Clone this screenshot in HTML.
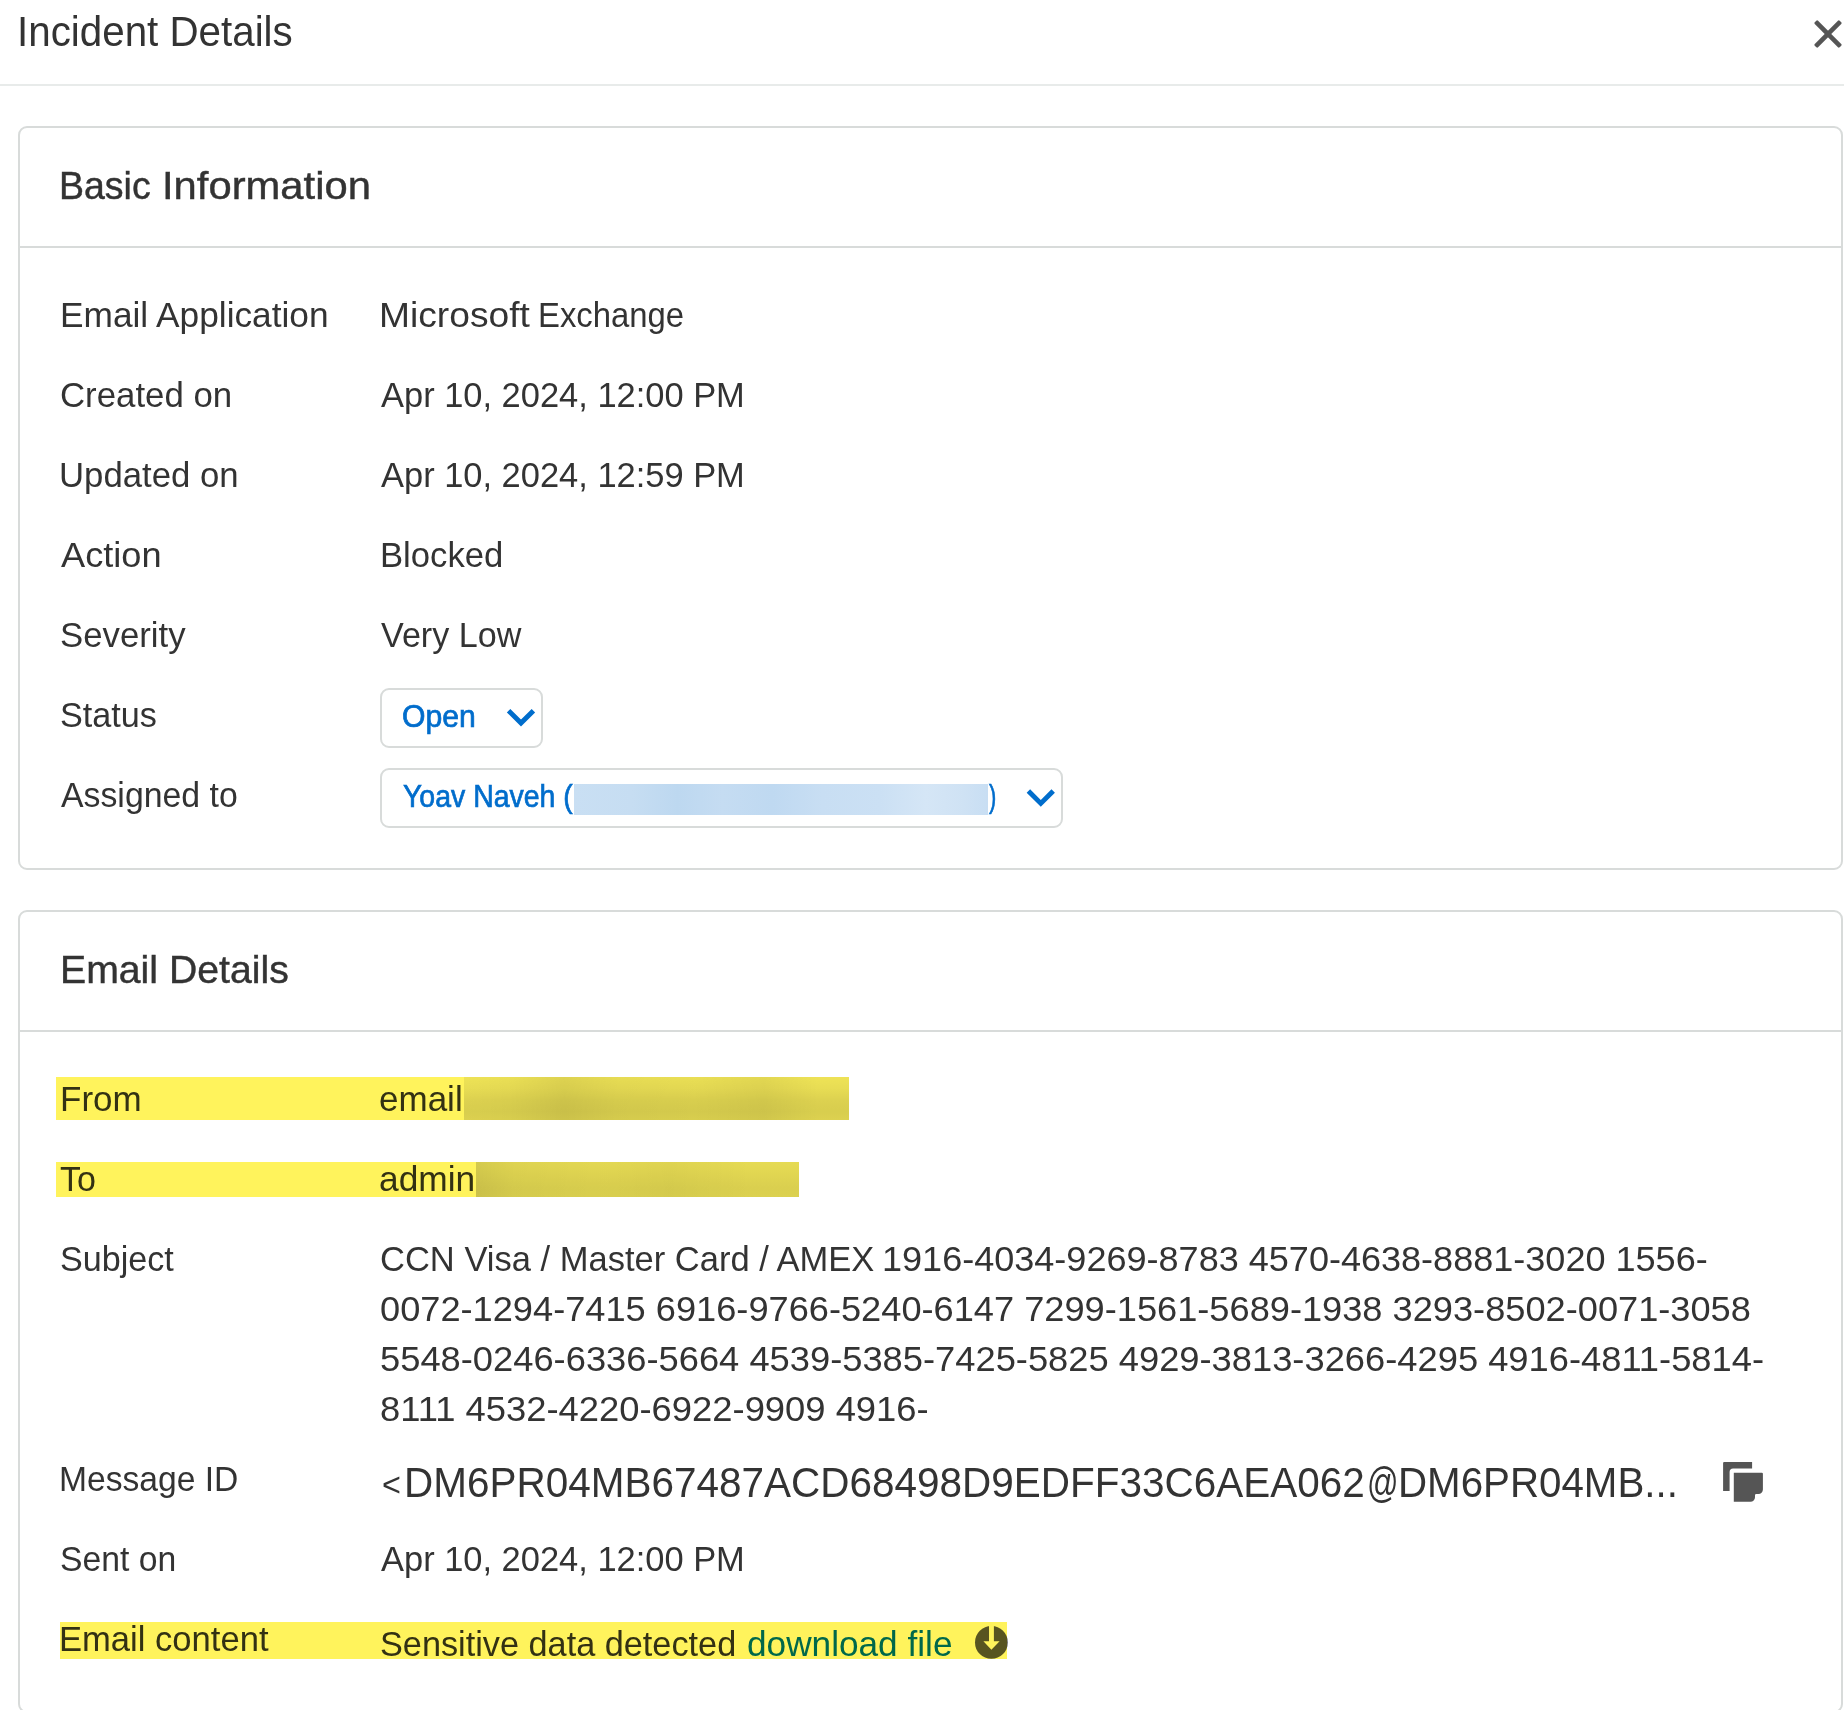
<!DOCTYPE html><html lang="en"><head><meta charset="utf-8"><title>Incident Details</title><style>
*{box-sizing:border-box;margin:0;padding:0}
html,body{width:1844px;height:1710px;overflow:hidden;background:#fff}
body{position:relative;font-family:"Liberation Sans",Arial,sans-serif;color:#333}
.t{position:absolute;white-space:nowrap;line-height:1;transform-origin:0 50%;font-weight:400;font-style:normal;text-decoration:none}
h1,h2{font-weight:400;font-size:inherit}
.hdr{position:absolute;left:0;top:0;width:1844px;height:86px;border-bottom:2px solid #e8ebea}
.card{position:absolute;left:18px;width:1825px;border:2px solid #d8dbda;border-radius:9px}
.c1{top:126px;height:744px}
.c2{top:910px;height:803px}
.hr{position:absolute;left:20px;width:1821px;height:2px;background:#d8dbda}
.sel{position:absolute;border:2px solid #d8dbda;border-radius:9px;background:#fff}
.blur{position:absolute}
.hl{position:absolute;background:#fff35c;mix-blend-mode:multiply}
svg{position:absolute;overflow:visible}
</style></head><body>
<header class="hdr"><h1><span class="t" style="left:17.14px;top:11.00px;font-size:42.5px;transform:scaleX(0.9490);color:#333333;">Incident Details</span></h1>
<svg width="1844" height="86" viewBox="0 0 1844 86"><g fill="#555" transform="translate(1828 34)"><rect x="-17.6" y="-2.35" width="35.2" height="4.7" rx="1.2" transform="rotate(45)"/><rect x="-17.6" y="-2.35" width="35.2" height="4.7" rx="1.2" transform="rotate(-45)"/></g></svg></header>
<section class="card c1"></section><div class="hr" style="top:246px"></div>
<h2><span class="t" style="left:59.25px;top:165.50px;font-size:39px;transform:scaleX(0.9610);color:#333333;-webkit-text-stroke:0.45px #333333;">Basic</span><span class="t" style="left:162.36px;top:165.50px;font-size:39px;transform:scaleX(1.0708);color:#333333;-webkit-text-stroke:0.45px #333333;">Information</span></h2>
<div class="row"><label class="t" style="left:59.66px;top:296.50px;font-size:35px;transform:scaleX(1.0077);color:#333333;">Email Application</label><span class="t" style="left:378.94px;top:296.50px;font-size:35px;transform:scaleX(1.0625);color:#333333;">Microsoft</span><span class="t" style="left:537.58px;top:296.50px;font-size:35px;transform:scaleX(0.9387);color:#333333;">Exchange</span></div>
<div class="row"><label class="t" style="left:60.38px;top:376.50px;font-size:35px;transform:scaleX(0.9937);color:#333333;">Created on</label><span class="t" style="left:381.00px;top:376.50px;font-size:35px;transform:scaleX(0.9841);color:#333333;">Apr 10, 2024, 12:00 PM</span></div>
<div class="row"><label class="t" style="left:59.37px;top:456.50px;font-size:35px;transform:scaleX(0.9921);color:#333333;">Updated on</label><span class="t" style="left:381.00px;top:456.50px;font-size:35px;transform:scaleX(0.9841);color:#333333;">Apr 10, 2024, 12:59 PM</span></div>
<div class="row"><label class="t" style="left:60.60px;top:536.50px;font-size:35px;transform:scaleX(1.0344);color:#333333;">Action</label><span class="t" style="left:379.68px;top:536.50px;font-size:35px;transform:scaleX(0.9903);color:#333333;">Blocked</span></div>
<div class="row"><label class="t" style="left:60.03px;top:616.50px;font-size:35px;transform:scaleX(0.9932);color:#333333;">Severity</label><span class="t" style="left:381.20px;top:616.50px;font-size:35px;transform:scaleX(0.9749);color:#333333;">Very Low</span></div>
<div class="row"><label class="t" style="left:60.10px;top:696.50px;font-size:35px;transform:scaleX(0.9770);color:#333333;">Status</label><div class="sel" style="left:380px;top:688px;width:163px;height:60px"></div><span class="t" style="left:402.23px;top:701.00px;font-size:30.5px;transform:scaleX(0.9880);color:#006dcc;-webkit-text-stroke:0.7px #006dcc;">Open</span>
<svg width="1844" height="1710" viewBox="0 0 1844 1710" style="left:0;top:0"><polyline fill="none" stroke="#006dcc" stroke-width="4.9" points="508.6,710.7 521,723.1 533.4,710.7"/></svg></div>
<div class="row"><label class="t" style="left:60.60px;top:776.50px;font-size:35px;transform:scaleX(0.9661);color:#333333;">Assigned to</label><div class="sel" style="left:380px;top:768px;width:683px;height:60px"></div><span class="t" style="left:402.64px;top:781.00px;font-size:31px;transform:scaleX(0.9176);color:#006dcc;-webkit-text-stroke:0.7px #006dcc;">Yoav Naveh (</span><div class="blur" style="left:574px;top:784px;width:414px;height:31px;background:linear-gradient(90deg,#c9dff3 0%,#c6ddf2 14%,#bdd8f0 25%,#c5dcf2 36%,#bfd9f1 48%,#c8def3 60%,#cbe0f4 74%,#d5e6f6 85%,#cfe2f4 94%,#c8def3 100%)"></div><span class="t" style="left:989.47px;top:781.00px;font-size:31px;transform:scaleX(0.7038);color:#006dcc;-webkit-text-stroke:0.7px #006dcc;">)</span><svg width="1844" height="1710" viewBox="0 0 1844 1710" style="left:0;top:0"><polyline fill="none" stroke="#006dcc" stroke-width="4.9" points="1028.4,791 1040.8,803.4 1053.2,791"/></svg></div>
<section class="card c2"></section><div class="hr" style="top:1030px"></div>
<h2><label class="t" style="left:59.59px;top:949.50px;font-size:39px;transform:scaleX(1.0053);color:#333333;-webkit-text-stroke:0.45px #333333;">Email Details</label></h2>
<div class="row"><label class="t" style="left:60.29px;top:1080.50px;font-size:35px;transform:scaleX(0.9999);color:#333333;">From</label><span class="t" style="left:379.39px;top:1080.50px;font-size:35px;transform:scaleX(1.0003);color:#333333;">email</span><div class="blur" style="left:464px;top:1077px;width:385px;height:43px;background:linear-gradient(90deg,rgba(0,0,0,0) 0%,rgba(0,0,0,.02) 12%,rgba(0,0,0,.07) 26%,rgba(0,0,0,.03) 40%,rgba(0,0,0,.02) 60%,rgba(0,0,0,.05) 78%,rgba(0,0,0,0) 92%),linear-gradient(180deg,#eeeeee 0%,#e8e8e8 25%,#dcdcdc 55%,#d8d8d8 80%,#dcdcdc 100%)"></div></div>
<div class="row"><label class="t" style="left:60.42px;top:1160.50px;font-size:35px;transform:scaleX(0.9713);color:#333333;">To</label><span class="t" style="left:379.35px;top:1160.50px;font-size:35px;transform:scaleX(1.0086);color:#333333;">admin</span><div class="blur" style="left:476px;top:1162px;width:323px;height:35px;background:linear-gradient(90deg,rgba(0,0,0,.08) 0%,rgba(0,0,0,.03) 12%,rgba(0,0,0,.01) 40%,rgba(0,0,0,.03) 60%,rgba(0,0,0,0) 85%),linear-gradient(180deg,#e6e6e6 0%,#e0e0e0 40%,#dadada 75%,#dcdcdc 100%)"></div></div>
<div class="row"><label class="t" style="left:59.68px;top:1240.50px;font-size:35px;transform:scaleX(0.9750);color:#333333;">Subject</label>
<span class="t" style="left:380.20px;top:1240.50px;font-size:35px;transform:scaleX(0.9863);color:#333333;">CCN Visa / Master Card / AMEX</span>
<span class="t" style="left:882.22px;top:1240.50px;font-size:35px;transform:scaleX(1.0298);color:#333333;">1916-4034-9269-8783 4570-4638-8881-3020 1556-</span>
<span class="t" style="left:380.00px;top:1290.50px;font-size:35px;transform:scaleX(1.0344);color:#333333;">0072-1294-7415 6916-9766-5240-6147 7299-1561-5689-1938 3293-8502-0071-3058</span>
<span class="t" style="left:379.53px;top:1340.50px;font-size:35px;transform:scaleX(1.0372);color:#333333;">5548-0246-6336-5664 4539-5385-7425-5825 4929-3813-3266-4295 4916-4811-5814-</span>
<span class="t" style="left:379.81px;top:1390.50px;font-size:35px;transform:scaleX(1.0390);color:#333333;">8111 4532-4220-6922-9909 4916-</span>
</div>
<div class="row"><label class="t" style="left:59.28px;top:1460.50px;font-size:35px;transform:scaleX(0.9605);color:#333333;">Message ID</label><span class="t" style="left:381.53px;top:1467.00px;font-size:34px;transform:scaleX(0.9519);color:#333333;">&lt;</span><span class="t" style="left:403.62px;top:1462.00px;font-size:42.5px;transform:scaleX(0.9525);color:#333333;">DM6PR04MB67487ACD68498D9EDFF33C6AEA062</span><span class="t" style="left:1366.64px;top:1462.00px;font-size:42.5px;transform:scaleX(0.7308);color:#333333;">@</span><span class="t" style="left:1398.31px;top:1462.00px;font-size:42.5px;transform:scaleX(0.9481);color:#333333;">DM6PR04MB...</span>
<svg width="1844" height="1710" viewBox="0 0 1844 1710" style="left:0;top:0"><g fill="#555"><path d="M1724.1 1462 H1752.1 V1468.5 H1733.1 A3.5 3.5 0 0 0 1729.6 1472 V1491 H1723.1 V1463 A1 1 0 0 1 1724.1 1462 Z"/><path d="M1733.8 1472.8 H1761.9 A1 1 0 0 1 1762.9 1473.8 V1489.5 A4.5 4.5 0 0 1 1758.4 1494 H1756.3 A1.3 1.3 0 0 0 1755 1495.3 V1497.3 A4.5 4.5 0 0 1 1750.5 1501.8 H1733.8 Z"/></g></svg></div>
<div class="row"><label class="t" style="left:59.79px;top:1540.50px;font-size:35px;transform:scaleX(0.9628);color:#333333;">Sent on</label><span class="t" style="left:381.00px;top:1540.50px;font-size:35px;transform:scaleX(0.9841);color:#333333;">Apr 10, 2024, 12:00 PM</span></div>
<div class="row"><label class="t" style="left:59.47px;top:1620.80px;font-size:35px;transform:scaleX(0.9879);color:#333333;">Email content</label><span class="t" style="left:379.66px;top:1625.80px;font-size:35px;transform:scaleX(0.9789);color:#333333;">Sensitive data detected</span><a href="#" class="t" style="left:746.77px;top:1625.80px;font-size:35px;transform:scaleX(1.0056);color:#006dcc;">download file</a>
<svg width="1844" height="1710" viewBox="0 0 1844 1710" style="left:0;top:0"><circle cx="991.4" cy="1642.4" r="16.4" fill="#585858"/><path fill="#fff" d="M989 1625 H993.9 V1641.2 H999.6 L991.4 1649.7 L983.4 1641.2 H989 Z"/></svg></div>
<div class="hl" style="left:56px;top:1077px;width:793px;height:43px"></div>
<div class="hl" style="left:56px;top:1162px;width:743px;height:35px"></div>
<div class="hl" style="left:60px;top:1622px;width:947px;height:37px"></div>
</body></html>
